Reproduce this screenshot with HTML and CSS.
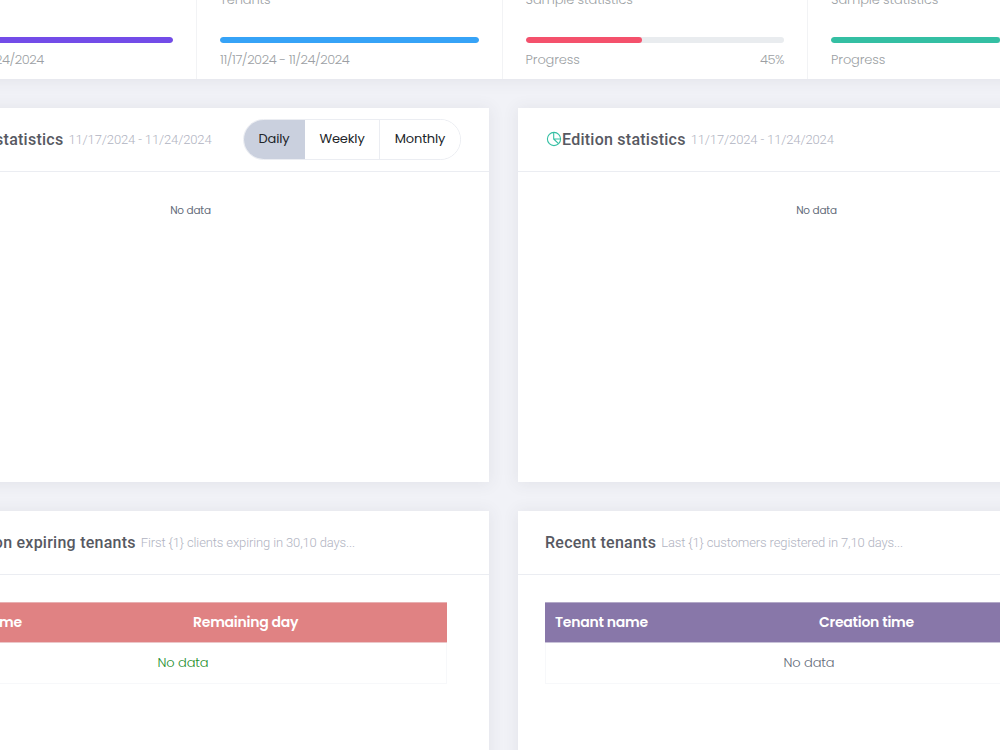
FILE: index.html
```html
<!DOCTYPE html>
<html lang="en">
<head>
    <meta charset="UTF-8">
    <meta name="viewport" content="width=device-width, initial-scale=1.0">
    <title>Host Dashboard</title>
    <link rel="stylesheet" href="styles.css">
</head>
<body>
    <main class="dashboard">
        <section class="stats">
            <div class="stat">
                <span class="stat-desc">Income</span>
                <div class="progress"><div class="progress-bar purple"></div></div>
                <div class="stat-foot"><span class="dates">11/17/2024 - 11/24/2024</span></div>
            </div>
            <div class="stat">
                <span class="stat-desc">Tenants</span>
                <div class="progress"><div class="progress-bar blue"></div></div>
                <div class="stat-foot"><span class="dates">11/17/2024 - 11/24/2024</span></div>
            </div>
            <div class="stat">
                <span class="stat-desc">Sample statistics</span>
                <div class="progress"><div class="progress-bar red" style="width: 45%"></div></div>
                <div class="stat-foot"><span>Progress</span><span class="percent">45%</span></div>
            </div>
            <div class="stat">
                <span class="stat-desc">Sample statistics</span>
                <div class="progress"><div class="progress-bar green" style="width: 65%"></div></div>
                <div class="stat-foot"><span>Progress</span><span class="percent">65%</span></div>
            </div>
        </section>

        <section class="panels">
            <div class="panel">
                <header class="panel-head">
                    <svg class="icon" viewBox="0 0 16 16"><path d="M2 13.5h12M3.5 11V7M8 11V3M12.5 11V5"/></svg>
                    <h3>Income statistics</h3>
                    <small>11/17/2024 - 11/24/2024</small>
                    <div class="btn-group">
                        <button class="active daily">Daily</button>
                        <button class="weekly">Weekly</button>
                        <button class="monthly">Monthly</button>
                    </div>
                </header>
                <p class="empty">No data</p>
            </div>
            <div class="panel">
                <header class="panel-head">
                    <svg class="icon" viewBox="0 0 16 16"><circle cx="8" cy="8" r="6.6"/><path d="M7.7 1.4V8h6.9M7.7 8l4.8 4.6"/></svg>
                    <h3>Edition statistics</h3>
                    <small>11/17/2024 - 11/24/2024</small>
                </header>
                <p class="empty">No data</p>
            </div>
            <div class="panel">
                <header class="panel-head">
                    <h3>Subscription expiring tenants</h3>
                    <small>First {1} clients expiring in 30,10 days...</small>
                </header>
                <table class="expiring">
                    <thead><tr><th>Tenant name</th><th>Remaining day</th></tr></thead>
                    <tbody><tr><td colspan="2">No data</td></tr></tbody>
                </table>
            </div>
            <div class="panel">
                <header class="panel-head">
                    <h3>Recent tenants</h3>
                    <small>Last {1} customers registered in 7,10 days...</small>
                </header>
                <table class="recent">
                    <thead><tr><th>Tenant name</th><th>Creation time</th></tr></thead>
                    <tbody><tr><td colspan="2">No data</td></tr></tbody>
                </table>
            </div>
        </section>
    </main>
</body>
</html>
```
FILE: styles.css
```css
:root {
    --bg-color: #f1f2f7; --text-color: #646c7a; --heading-color: #575962; --muted-color: #9c9fa4; --border-color: #ebedf2;
}
* { box-sizing: border-box; }
body { margin: 0; height: 750px; overflow: hidden; background-color: var(--bg-color); color: var(--text-color); font-family: Poppins, Inter, sans-serif; font-size: 13px; font-weight: 300; }
/* the wide dashboard is scrolled: its left edge and top lie outside the window */
.dashboard { width: 1223px; margin: -11px 0 0 -108px; }

/* stat cards */
.stats { display: grid; grid-template-columns: repeat(4, 305.5px); width: 1223px; height: 90px; margin-left: -0.4px; background: #fff; box-shadow: 0 1px 15px 1px rgba(69, 65, 78, 0.08); }
.stat { padding: 0 23px; border-right: 1px solid #f2f3f5; color: var(--muted-color); line-height: 20px; letter-spacing: -0.13px; }
.stat:last-child { border-right: 0; }
.stat-desc { display: block; height: 48px; padding-top: 1px; }
.progress { height: 6px; border-radius: 3px; background: #e9ecef; overflow: hidden; }
.progress-bar { height: 100%; border-radius: 3px; }
.purple { background: #734ce8; }
.blue { background: #36a3f7; }
.red { background: #f4516c; }
.green { background: #34bfa3; }
.stat-foot { display: flex; justify-content: space-between; padding-top: 7px; }
.dates { letter-spacing: -0.46px; }
.percent { letter-spacing: -0.4px; }

/* panels */
.panels { display: grid; grid-template-columns: 597px 597px; gap: 29px; margin-top: 28.5px; }
.panel { height: 374.5px; background: #fff; box-shadow: 0 1px 15px 1px rgba(69, 65, 78, 0.08); }
.panel-head { display: flex; align-items: center; height: 64px; padding: 0 27px; border-bottom: 1px solid var(--border-color); font-family: Roboto, sans-serif; }
.icon { width: 16px; height: 16px; margin: 0 0 1px 1px; fill: none; stroke: #34bfa3; stroke-width: 1.1; }
h3 { margin: 0; color: var(--heading-color); font-size: 16px; font-weight: 500; letter-spacing: 0.25px; white-space: nowrap; }
small { margin-left: 5px; color: #b0b3c1; font-size: 13px; font-weight: 300; letter-spacing: -0.13px; white-space: nowrap; }
.btn-group { display: flex; margin-left: auto; margin-right: 1px; height: 41px; border: 1px solid var(--border-color); border-radius: 21px; overflow: hidden; }
button { padding: 0; border: 0; border-right: 1px solid var(--border-color); background: #fff; color: #212529; font-family: Poppins, Inter, sans-serif; font-size: 13px; letter-spacing: -0.13px; }
button:last-child { border-right: 0; }
button.active { background: #cad0de; border-color: #cad0de; }
.daily { width: 61px; }
.weekly { width: 75px; }
.monthly { width: 80px; }
.empty { margin: 31px 0 0; text-align: center; font-size: 10.5px; font-weight: 400; line-height: 16px; letter-spacing: -0.2px; }

/* tenant tables */
table { width: 528px; margin: 27px 0 0 27px; border-collapse: separate; border-spacing: 0; table-layout: fixed; }
th { height: 41px; padding: 0 10px; border-top: 1px solid rgba(244, 245, 248, 0.4); border-bottom: 1px solid rgba(244, 245, 248, 0.6); color: #fff; font-size: 14px; font-weight: 600; letter-spacing: -0.24px; text-align: left; }
td { height: 41px; padding: 0; border: 1px solid #f7f8fa; border-top: 0; letter-spacing: -0.1px; text-align: center; }
.expiring thead { background: #e08283; }
.recent thead { background: #8877a9; }
.expiring td { color: #1f8f2f; }
```
